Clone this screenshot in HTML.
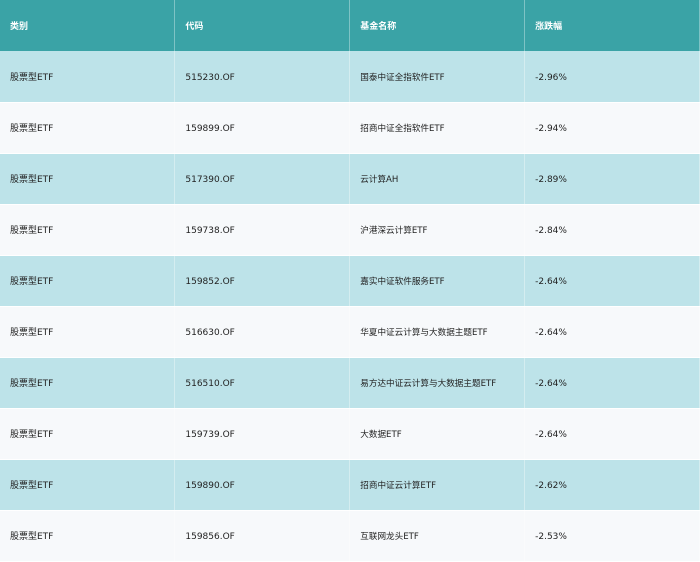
<!DOCTYPE html><html><head><meta charset="utf-8"><style>
body{margin:0;width:700px;height:560px;overflow:hidden;background:#f7f9fb;font-family:"DejaVu Sans","Noto Sans CJK SC",sans-serif;font-size:9px;color:#222}
table{border-collapse:collapse;width:700px;table-layout:fixed}
td,th{height:51px;padding:3px 0 0 10px;box-sizing:border-box;text-align:left;vertical-align:middle;line-height:12px;border-bottom:1px solid #fff;border-right:1px solid rgba(255,255,255,0.35);font-weight:normal;white-space:nowrap}
td span,th span{display:inline-block;vertical-align:middle;line-height:12px}
th{background:#3aa3a6;color:#fff;font-weight:bold;border-bottom:0;height:51px}
tr:nth-child(even) td{background:#bde3e9}
tr:nth-child(odd) td{background:#f7f9fb}
.n{font-size:8.6px}
</style></head><body><table>
<tr><th><span>类别</span></th><th><span>代码</span></th><th><span>基金名称</span></th><th><span>涨跌幅</span></th></tr>
<tr><td><span>股票型ETF</span></td><td><span>515230.OF</span></td><td class="n"><span>国泰中证全指软件ETF</span></td><td><span>-2.96%</span></td></tr>
<tr><td><span>股票型ETF</span></td><td><span>159899.OF</span></td><td class="n"><span>招商中证全指软件ETF</span></td><td><span>-2.94%</span></td></tr>
<tr><td><span>股票型ETF</span></td><td><span>517390.OF</span></td><td class="n"><span>云计算AH</span></td><td><span>-2.89%</span></td></tr>
<tr><td><span>股票型ETF</span></td><td><span>159738.OF</span></td><td class="n"><span>沪港深云计算ETF</span></td><td><span>-2.84%</span></td></tr>
<tr><td><span>股票型ETF</span></td><td><span>159852.OF</span></td><td class="n"><span>嘉实中证软件服务ETF</span></td><td><span>-2.64%</span></td></tr>
<tr><td><span>股票型ETF</span></td><td><span>516630.OF</span></td><td class="n"><span>华夏中证云计算与大数据主题ETF</span></td><td><span>-2.64%</span></td></tr>
<tr><td><span>股票型ETF</span></td><td><span>516510.OF</span></td><td class="n"><span>易方达中证云计算与大数据主题ETF</span></td><td><span>-2.64%</span></td></tr>
<tr><td><span>股票型ETF</span></td><td><span>159739.OF</span></td><td class="n"><span>大数据ETF</span></td><td><span>-2.64%</span></td></tr>
<tr><td><span>股票型ETF</span></td><td><span>159890.OF</span></td><td class="n"><span>招商中证云计算ETF</span></td><td><span>-2.62%</span></td></tr>
<tr><td><span>股票型ETF</span></td><td><span>159856.OF</span></td><td class="n"><span>互联网龙头ETF</span></td><td><span>-2.53%</span></td></tr>
</table></body></html>
